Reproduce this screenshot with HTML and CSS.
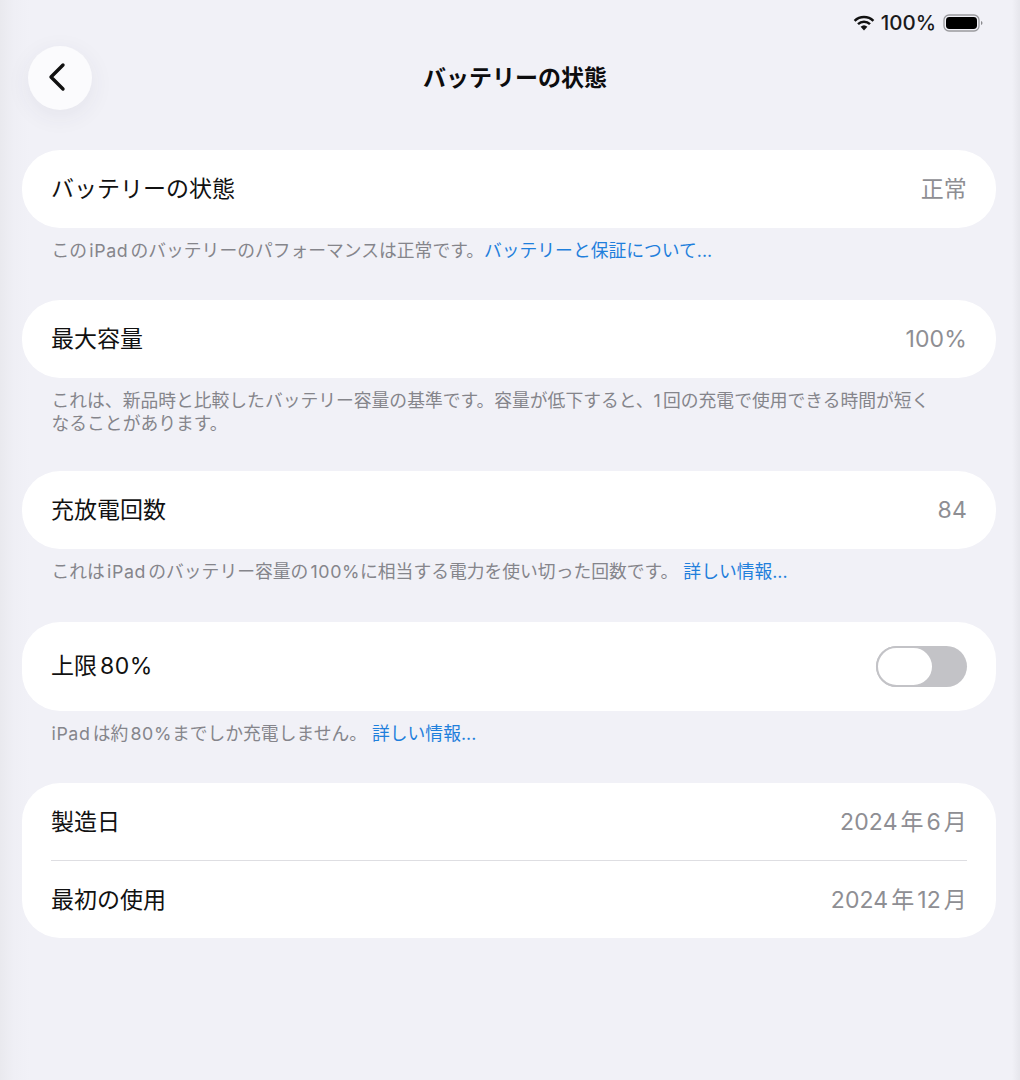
FILE: index.html
```html
<!DOCTYPE html>
<html lang="ja">
<head>
<meta charset="utf-8">
<title>バッテリーの状態</title>
<link rel="stylesheet" href="styles.css">
</head>
<body>
<div class="screen">
  <div class="status">
    <svg class="wifi" viewBox="0 0 22 16" width="22" height="16"><path d="M11 15.4 7.6 11.8a5 5 0 0 1 6.8 0Z" fill="#111"/><path d="M5 9.2a8.8 8.8 0 0 1 12 0M1.6 5.8a13.6 13.6 0 0 1 18.8 0" fill="none" stroke="#111" stroke-width="2.5"/></svg>
    <span class="pct">100%</span>
    <svg class="batt" viewBox="0 0 42 18" width="42" height="18"><rect x="1" y="1" width="35" height="16" rx="5" fill="none" stroke="#9a9a9e" stroke-width="1.3"/><rect x="3" y="3" width="31" height="12" rx="3.4" fill="#000"/><path d="M38 7v4a2 2 0 0 0 1.5-2A2 2 0 0 0 38 7Z" fill="#8a8a8e"/></svg>
  </div>
  <header class="nav">
    <button class="back" type="button" aria-label="戻る">
      <svg viewBox="0 0 24 32" width="24" height="32"><path d="M18 4 6 16l12 12" fill="none" stroke="#111" stroke-width="3.4" stroke-linecap="round" stroke-linejoin="round"/></svg>
    </button>
    <h1 class="title">バッテリーの状態</h1>
  </header>
  <main class="list">
    <section class="group">
      <div class="card"><div class="row"><span>バッテリーの状態</span><span class="val">正常</span></div></div>
      <p class="note">この<span class="latin">iPad</span>のバッテリーのパフォーマンスは正常です。<a>バッテリーと保証について...</a></p>
    </section>
    <section class="group">
      <div class="card"><div class="row"><span>最大容量</span><span class="val">100%</span></div></div>
      <p class="note two">これは、新品時と比較したバッテリー容量の基準です。容量が低下すると、1回の充電で使用できる時間が短く<br>なることがあります。</p>
    </section>
    <section class="group">
      <div class="card"><div class="row"><span>充放電回数</span><span class="val">84</span></div></div>
      <p class="note">これは<span class="latin">iPad</span>のバッテリー容量の<span class="latin">100%</span>に相当する電力を使い切った回数です。 <a>詳しい情報...</a></p>
    </section>
    <section class="group">
      <div class="card"><div class="row tall"><span>上限<span class="latin">80%</span></span><span class="toggle"><span class="knob"></span></span></div></div>
      <p class="note"><span class="latin">iPad</span>は約<span class="latin">80%</span>までしか充電しません。 <a>詳しい情報...</a></p>
    </section>
    <section class="group">
      <div class="card">
        <div class="row slim"><span>製造日</span><span class="val">2024年6月</span></div>
        <div class="rule"></div>
        <div class="row slim"><span>最初の使用</span><span class="val">2024年12月</span></div>
      </div>
    </section>
  </main>
</div>
</body>
</html>
```
FILE: styles.css
```css
* { box-sizing: border-box; }
html, body { margin: 0; padding: 0; }
body {
  width: 1020px;
  height: 1080px;
  overflow: hidden;
  font-family: Inter, "Noto Sans CJK JP", sans-serif;
  color: #111;
  text-autospace: normal;
}
.screen {
  width: 1020px;
  height: 1080px;
  padding: 0 24px 0 22px;
  background: linear-gradient(90deg, #e9e9ee 0, #efeff5 14px, #f1f1f7 30px, #f1f1f7 1012px, #e6e6ec 1020px);
}
.status {
  height: 46px;
  margin-right: 12px;
  display: flex;
  justify-content: flex-end;
  align-items: center;
  gap: 6px;
}
.wifi { flex: none; }
.pct { font-size: 20.5px; line-height: 1; font-weight: 500; color: #1a1a1c; margin-right: 1px; }
.batt { flex: none; margin-right: -1px; }
.nav {
  height: 64px;
  display: flex;
  align-items: center;
}
.back {
  width: 64px;
  height: 64px;
  margin-left: 6px;
  border: 0;
  padding: 0;
  border-radius: 50%;
  background: #fbfbfd;
  box-shadow: 0 6px 24px rgba(60, 60, 80, 0.07);
  display: flex;
  align-items: center;
  justify-content: center;
  flex: none;
}
.back svg { margin-left: -7px; margin-top: -3px; }
.title {
  flex: 1;
  margin: 0;
  padding-right: 58px;
  text-align: center;
  font-size: 23px;
  line-height: 32px;
  font-weight: 700;
  color: #0c0c0e;
}
.list { padding-top: 40px; }
.card {
  background: #fff;
  border-radius: 38px;
  padding: 0 29px;
}
.row {
  height: 78px;
  display: flex;
  justify-content: space-between;
  align-items: center;
  font-size: 23px;
  line-height: 32px;
}
.row.tall { height: 89px; }
.row.slim { height: 77px; padding-top: 1px; }
.val { color: #8e8e93; letter-spacing: 0.15px; }
.latin { letter-spacing: 0.6px; }
.rule { height: 1px; background: #dedee2; }
.note {
  margin: 0;
  padding: 11px 29px 38.3px 29.5px;
  font-size: 17.8px;
  line-height: 23px;
  color: #85858b;
}
.note.two { padding-bottom: 36px; }
.note a { color: #1f7fdc; }
.toggle {
  width: 91px;
  height: 41px;
  border-radius: 21px;
  background: #c3c3c7;
  display: block;
  position: relative;
}
.knob {
  position: absolute;
  left: 0;
  top: 0;
  width: 58px;
  height: 41px;
  border-radius: 21px;
  background: #fff;
  border: 2px solid #c3c3c7;
}
```
